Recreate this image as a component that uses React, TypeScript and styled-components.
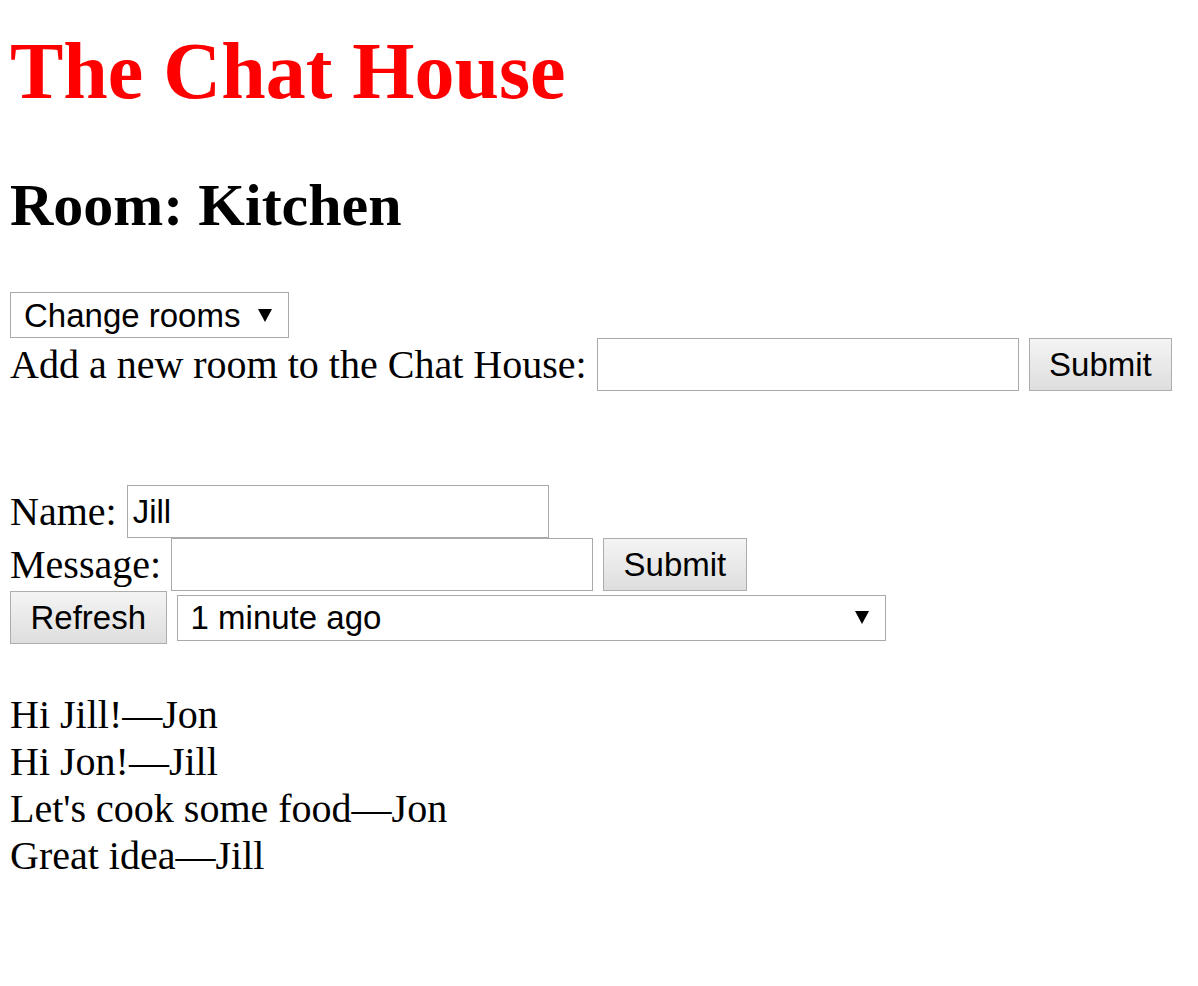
import React from 'react';
import styled, { createGlobalStyle } from 'styled-components';

const GlobalStyle = createGlobalStyle`
  html, body {
    margin: 0;
    padding: 0;
    background: #fff;
  }
  body {
    font-family: "Liberation Serif", "Times New Roman", serif;
    font-size: 40px;
    color: #000;
  }
`;

const Page = styled.div`
  padding: 10px;
`;

const Title = styled.h1`
  margin: 15px 0 54px;
  font-size: 80px;
  line-height: 92px;
  font-weight: 700;
  color: #ff0000;
`;

const RoomHeading = styled.h2`
  margin: 0 0 52px;
  font-size: 60px;
  line-height: 69px;
  font-weight: 700;
`;

const Row = styled.div<{ $height?: number }>`
  display: flex;
  align-items: center;
  gap: 10px;
  height: ${(p) => p.$height ?? 53}px;
`;

const Label = styled.label`
  font-size: 40px;
  line-height: 46px;
  white-space: nowrap;
`;

const TextInput = styled.input`
  box-sizing: border-box;
  width: 422px;
  height: 53px;
  padding: 0 5px;
  border: 1px solid #a9a9a9;
  background: #fff;
  font-family: "Liberation Sans", Arial, sans-serif;
  font-size: 33px;
  color: #000;
  outline: none;
`;

const Button = styled.button`
  box-sizing: border-box;
  height: 53px;
  padding: 0 19.5px;
  border: 1px solid #adadad;
  border-radius: 0;
  background: linear-gradient(#f4f4f4, #dedede);
  font-family: "Liberation Sans", Arial, sans-serif;
  font-size: 33px;
  color: #000;
`;

const SelectBox = styled.div<{ $width?: number }>`
  box-sizing: border-box;
  display: flex;
  align-items: center;
  height: 46px;
  width: ${(p) => (p.$width ? `${p.$width}px` : 'auto')};
  padding: 0 16px 0 13px;
  border: 1px solid #a9a9a9;
  background: #fff;
`;

const NativeSelect = styled.select`
  flex: 1;
  appearance: none;
  border: none;
  background: transparent;
  padding: 0;
  margin: 0 17px 0 0;
  font-family: "Liberation Sans", Arial, sans-serif;
  font-size: 33px;
  color: #000;
  outline: none;
`;

const Arrow = () => (
  <svg width="14" height="13" viewBox="0 0 14 13" aria-hidden="true">
    <path d="M0 0 H14 L7 13 Z" fill="#000" />
  </svg>
);

const Spacer = styled.div<{ $height: number }>`
  height: ${(p) => p.$height}px;
`;

const Messages = styled.div`
  font-size: 40px;
  line-height: 47px;
`;

const Message = styled.div``;

const messages = [
  { text: 'Hi Jill!', author: 'Jon' },
  { text: 'Hi Jon!', author: 'Jill' },
  { text: "Let's cook some food", author: 'Jon' },
  { text: 'Great idea', author: 'Jill' },
];

export default function App() {
  return (
    <Page>
      <GlobalStyle />
      <Title>The Chat House</Title>
      <RoomHeading>Room: Kitchen</RoomHeading>

      <Row $height={46}>
        <SelectBox>
          <NativeSelect defaultValue="">
            <option value="">Change rooms</option>
            <option value="kitchen">Kitchen</option>
          </NativeSelect>
          <Arrow />
        </SelectBox>
      </Row>
      <Row>
        <Label>Add a new room to the Chat House:</Label>
        <TextInput type="text" />
        <Button>Submit</Button>
      </Row>

      <Spacer $height={94} />

      <Row>
        <Label>Name:</Label>
        <TextInput type="text" defaultValue="Jill" />
      </Row>
      <Row>
        <Label>Message:</Label>
        <TextInput type="text" />
        <Button>Submit</Button>
      </Row>
      <Row>
        <Button>Refresh</Button>
        <SelectBox $width={709}>
          <NativeSelect defaultValue="1">
            <option value="1">1 minute ago</option>
            <option value="5">5 minutes ago</option>
          </NativeSelect>
          <Arrow />
        </SelectBox>
      </Row>

      <Spacer $height={47} />

      <Messages>
        {messages.map((m, i) => (
          <Message key={i}>
            {m.text}—{m.author}
          </Message>
        ))}
      </Messages>
    </Page>
  );
}
